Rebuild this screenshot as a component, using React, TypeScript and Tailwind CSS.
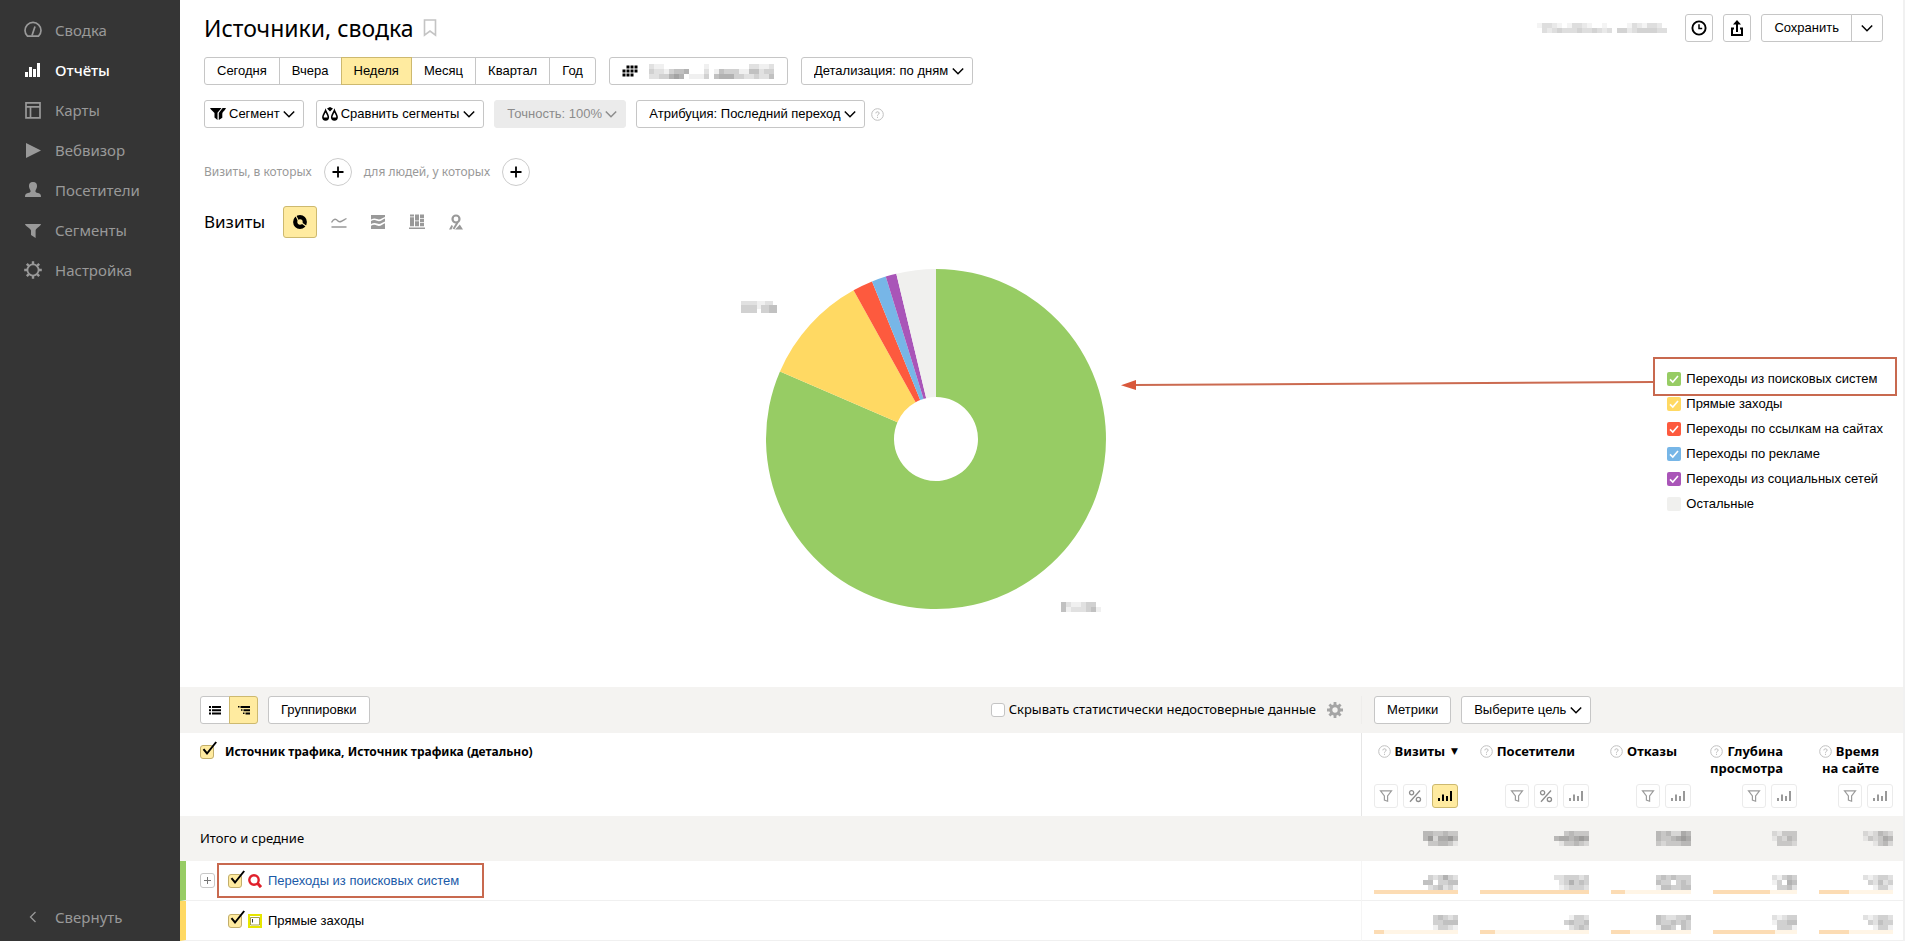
import type { ReactNode } from "react";

const PERIODS = ["Сегодня", "Вчера", "Неделя", "Месяц", "Квартал", "Год"];

const SLICES = [
  { label: "Переходы из поисковых систем", color: "#97cc64", from: 0, to: 293.4, checked: true },
  { label: "Прямые заходы", color: "#ffd963", from: 293.4, to: 331, checked: true },
  { label: "Переходы по ссылкам на сайтах", color: "#fd5a3e", from: 331, to: 337.9, checked: true },
  { label: "Переходы по рекламе", color: "#77b6e7", from: 337.9, to: 342.8, checked: true },
  { label: "Переходы из социальных сетей", color: "#a955b8", from: 342.8, to: 346.5, checked: true },
  { label: "Остальные", color: "#f0f0ee", from: 346.5, to: 360, checked: false },
];

// Hidden values: every digit is the darkness of one square
const MASKS = {
  total: [
    ["4433433", "4625564", "0334431"],
    ["0034333", "4554565", "0133432"],
    ["4342254", "4334565", "3233344"],
    ["21333", "13243", "03332"],
    ["212432", "132354", "001342"],
  ],
  search: [
    ["0323532", "4403344", "0234231"],
    ["2233323", "0235343", "0123332"],
    ["3434333", "4330343", "1443344"],
    ["21343", "13054", "03342"],
    ["212332", "032423", "001331"],
  ],
  direct: [
    ["34323", "33444", "13321"],
    ["01332", "34334", "02343"],
    ["4322334", "4334343", "1443043"],
    ["21233", "13344", "03331"],
    ["212332", "032433", "001331"],
  ],
};

const METRICS = [
  { title: ["Визиты"], percent: true, sorted: true, search: 100, direct: 12 },
  { title: ["Посетители"], percent: true, sorted: false, search: 100, direct: 14 },
  { title: ["Отказы"], percent: false, sorted: false, search: 18, direct: 24 },
  { title: ["Глубина", "просмотра"], percent: false, sorted: false, search: 68, direct: 74 },
  { title: ["Время", "на сайте"], percent: false, sorted: false, search: 40, direct: 40 },
];

const BUTTON = "h-7 rounded-[3px] border border-[#c6c6c6] bg-white text-[13px] text-black";

function Mosaic({ rows, cell = 5, x, y }: { rows: string[]; cell?: number; x?: number; y?: number }) {
  const cols = Math.max(...rows.map((r) => r.length));
  return (
    <svg x={x} y={y} width={cols * cell} height={rows.length * cell} shapeRendering="crispEdges" aria-hidden="true">
      {rows.map((row, j) =>
        row.split("").map((d, i) => (
          <rect key={`${j}-${i}`} x={i * cell} y={j * cell} width={cell} height={cell} fill="#333" opacity={Number(d) * 0.075} />
        ))
      )}
    </svg>
  );
}

function Chevron({ size = 12, className = "" }: { size?: number; className?: string }) {
  return (
    <svg width={size} height={size} viewBox="0 0 12 12" fill="none" stroke="currentColor" strokeWidth="1.5" className={className}>
      <path d="M.8 3.5 6 8.7 11.2 3.5" />
    </svg>
  );
}

function Dropdown({ label, text, disabled = false }: { label: string; text: string; disabled?: boolean }) {
  return (
    <div className={`relative inline-flex ${disabled ? "text-[#8c8c8c]" : "text-black"}`}>
      <select
        aria-label={label}
        disabled={disabled}
        className={`h-7 appearance-none rounded-[3px] border pl-3 pr-[23px] text-[13px] opacity-100 ${
          disabled ? "border-[#ebebeb] bg-[#ebebeb]" : "border-[#c6c6c6] bg-white"
        }`}
      >
        <option>{text}</option>
      </select>
      <Chevron className="pointer-events-none absolute right-[9px] top-2" />
    </div>
  );
}

function Help() {
  return (
    <svg width="13" height="13" viewBox="0 0 13 13" fill="none" className="shrink-0">
      <circle cx="6.5" cy="6.5" r="5.8" stroke="#c0c0c0" />
      <path d="M4.9 5.3c0-2 3.2-2 3.2 0 0 1-1.6 1.1-1.6 2.3M6.5 8.8v1" stroke="#b5b5b5" />
    </svg>
  );
}

function Funnel() {
  return (
    <svg width="14" height="14" viewBox="0 0 14 14" fill="none" stroke="#9b9b9b" strokeWidth="1.2">
      <path d="M1.5 1.8h11L8.6 7v5.2L5.4 11V7Z" />
    </svg>
  );
}

function Percent() {
  return (
    <svg width="14" height="14" viewBox="0 0 14 14" fill="none" stroke="#8c8c8c" strokeWidth="1.3">
      <circle cx="3.6" cy="3.8" r="2.1" />
      <circle cx="10.4" cy="10.4" r="2.1" />
      <path d="M12 1.5 2 12.8" />
    </svg>
  );
}

function MiniBars() {
  return (
    <svg width="16" height="14" viewBox="0 0 16 14" fill="currentColor">
      <path d="M1 9h2v3H1zM5 5.5h2V12H5zM9 7h2v5H9zM13 2h2v10h-2z" />
    </svg>
  );
}

// Box with a tick that sticks out over its corner
function Tick({ label }: { label: string }) {
  return (
    <span className="relative inline-block size-[14px] shrink-0">
      <input
        type="checkbox"
        defaultChecked
        aria-label={label}
        className="block size-[14px] appearance-none rounded-[3px] border border-[#c2ae6b] bg-[#ffeba0]"
      />
      <svg width="18" height="18" viewBox="0 0 18 18" fill="none" className="pointer-events-none absolute bottom-0 left-0">
        <path d="M3.5 8.2 7 12.5 16.2 1" stroke="#000" strokeWidth="2" />
      </svg>
    </span>
  );
}

function polar(r: number, deg: number) {
  const a = (deg * Math.PI) / 180;
  return `${(r * Math.sin(a)).toFixed(2)} ${(-r * Math.cos(a)).toFixed(2)}`;
}

function slicePath(from: number, to: number) {
  const large = to - from > 180 ? 1 : 0;
  return `M${polar(170, from)}A170 170 0 ${large} 1 ${polar(170, to)}L${polar(42, to)}A42 42 0 ${large} 0 ${polar(42, from)}Z`;
}

const NAV: { label: string; active?: boolean; icon: ReactNode }[] = [
  {
    label: "Сводка",
    icon: (
      <g fill="none" stroke="currentColor" strokeWidth="1.7">
        <path d="M3.5 15.2A8 8 0 1 1 14.5 15.2Z" />
        <path d="M8 14.5 11 5.5" />
      </g>
    ),
  },
  { label: "Отчёты", active: true, icon: <path d="M1 11h3v5H1zM5 6h3v10H5zM9 8h3v8H9zM13 2h3v14h-3z" fill="currentColor" /> },
  {
    label: "Карты",
    icon: <path d="M2 1.9h14v15H2ZM2 5.8h14M6.5 5.8v11" fill="none" stroke="currentColor" strokeWidth="1.7" />,
  },
  { label: "Вебвизор", icon: <path d="M2 2 17 9.5 2 17Z" fill="currentColor" /> },
  {
    label: "Посетители",
    icon: <path d="M9 1c3 0 4.3 2 4 4.6-.3 2.2-1.2 3-1.6 4.5 0 1.2.6 1.5 2.6 2 2.2.6 3 1.2 3 3.9H1c0-2.7.8-3.3 3-3.9 2-.5 2.6-.8 2.6-2C6.2 8.6 5.3 7.8 5 5.6 4.7 3 6 1 9 1Z" fill="currentColor" />,
  },
  { label: "Сегменты", icon: <path d="M1 3h16c-.6 2.6-5 4-5.4 6.5V17L7 14V9.5C6.2 7 1.6 5.6 1 3Z" fill="currentColor" /> },
  {
    label: "Настройка",
    icon: (
      <g fill="none" stroke="currentColor">
        <circle cx="9" cy="9" r="5.6" strokeWidth="1.8" />
        <path
          d="M9 .2v3M9 14.8v3M.2 9h3M14.8 9h3M2.8 2.8 4.9 4.9M13.1 13.1l2.1 2.1M2.8 15.2l2.1-2.1M13.1 4.9l2.1-2.1"
          strokeWidth="2.4"
        />
      </g>
    ),
  },
];

function Sidebar() {
  return (
    <aside className="flex w-[180px] shrink-0 flex-col justify-between bg-[#353535] pb-1 pt-[10px] font-['Noto_Sans',sans-serif] text-[15px]">
      <nav>
        {NAV.map((item) => (
          <a
            key={item.label}
            href="#"
            className={`flex h-10 items-center gap-[13px] pl-6 ${item.active ? "font-medium text-white" : "text-[#999]"}`}
          >
            <svg width="18" height="18" viewBox="0 0 18 18">
              {item.icon}
            </svg>
            {item.label}
          </a>
        ))}
      </nav>
      <button className="flex h-10 items-center gap-[13px] pl-6 text-[#999]">
        <svg width="18" height="18" viewBox="0 0 18 18" fill="none" stroke="currentColor" strokeWidth="1.3">
          <path d="M11.5 4 6.5 9l5 5" />
        </svg>
        Свернуть
      </button>
    </aside>
  );
}

function Toolbar() {
  return (
    <>
      <header className="flex h-7 items-center justify-between">
        <div className="flex items-center gap-[10px]">
          <h1 className="font-['Noto_Sans',sans-serif] text-[23px] leading-7">Источники, сводка</h1>
          <button aria-label="В закладки">
            <svg width="14" height="18" viewBox="0 0 14 18" fill="none" stroke="#c4c4c4" strokeWidth="1.6">
              <path d="M1.5 1h11v15.2L7 12l-5.5 4.2Z" />
            </svg>
          </button>
        </div>
        <div className="flex items-center">
          <div className="mr-[18px] opacity-70">
            <Mosaic rows={["13321013321001000013213320", "03234333433432304423444433"]} />
          </div>
          <button aria-label="История" className={`${BUTTON} mr-[10px] flex w-7 items-center justify-center`}>
            <svg width="16" height="16" viewBox="0 0 16 16" fill="none" stroke="#000" strokeWidth="1.9">
              <circle cx="8" cy="8" r="6.6" />
              <path d="M8 4.2V8.5h3.2" strokeWidth="1.5" />
            </svg>
          </button>
          <button aria-label="Поделиться" className={`${BUTTON} mr-[10px] flex w-7 items-center justify-center`}>
            <svg width="14" height="16" viewBox="0 0 14 16" fill="none" stroke="#000" strokeWidth="2">
              <path d="M4 8.5H2V15h10V8.5h-2M7 12V3" />
              <path d="M7 0 11 4.6H3Z" fill="#000" stroke="none" />
            </svg>
          </button>
          <button className={`${BUTTON} rounded-r-none px-3`}>Сохранить</button>
          <button aria-label="Ещё" className={`${BUTTON} -ml-px flex w-8 items-center justify-center rounded-l-none`}>
            <Chevron />
          </button>
        </div>
      </header>

      <div className="mt-[15px] flex">
        <div className="mr-[13px] flex">
          {PERIODS.map((p) => (
            <button
              key={p}
              className={`h-7 border px-3 text-[13px] not-first:-ml-px first:rounded-l-[3px] last:rounded-r-[3px] ${
                p === "Неделя" ? "z-10 border-[#cdb96f] bg-[#ffeba0]" : "border-[#c6c6c6] bg-white"
              }`}
            >
              {p}
            </button>
          ))}
        </div>
        <button aria-label="Выбрать даты" className={`${BUTTON} mr-[13px] flex w-[179px] items-center gap-[6px] pl-3`}>
          <svg width="16" height="12" viewBox="0 0 16 12">
            <path d="M4.5.5h3v3h-3zM8.5.5h3v3h-3zM12.5.5h3v3h-3zM.5 4.5h3v3h-3zM4.5 4.5h3v3h-3zM8.5 4.5h3v3h-3zM12.5 4.5h3v3h-3zM.5 8.5h3v3h-3zM4.5 8.5h3v3h-3zM8.5 8.5h3v3h-3z" />
          </svg>
          <Mosaic rows={["02110000000010000000022112", "03221344500020143331144233", "02233565011130455533223224"]} />
        </button>
        <Dropdown label="Детализация" text="Детализация: по дням" />
      </div>

      <div className="mt-[15px] flex items-center">
        <button className={`${BUTTON} mr-3 flex items-center gap-[3px] px-[5px] pr-2`}>
          <svg width="16" height="14" viewBox="0 0 16 14">
            <path d="M0 1h11.5L7.5 5.8V13L4.5 10.5V6C3.5 4.8 1 3 0 1ZM12.6 1H16c-.6 2.5-3.4 3.4-3.7 5.5v4.2L8.8 13V6Z" />
          </svg>
          Сегмент
          <Chevron />
        </button>
        <button className={`${BUTTON} mr-[10px] flex items-center gap-[3px] px-[5px] pr-2`}>
          <svg width="16" height="14" viewBox="0 0 16 14" fill="none" stroke="#000" strokeWidth="1.6">
            <path d="M3.6 3.5C2.6 6 .9 8 .9 10c0 1.6 1.2 2.9 2.7 2.9S6.3 11.6 6.3 10c0-2-1.7-4-2.7-6.5Z" />
            <path d="M12.4 3.5c-1 2.5-2.7 4.5-2.7 6.5 0 1.6 1.2 2.9 2.7 2.9s2.7-1.3 2.7-2.9c0-2-1.7-4-2.7-6.5Z" />
            <path d="M1.5 10.5h4.2v2H1.5zM10.3 10.5h4.2v2h-4.2zM5 1.5 8 4.5l3-3L8 0Z" fill="#000" stroke="none" />
          </svg>
          Сравнить сегменты
          <Chevron className="ml-px" />
        </button>
        <div className="mr-[10px] flex">
          <Dropdown label="Точность" text="Точность: 100%" disabled />
        </div>
        <div className="mr-[6px] flex">
          <Dropdown label="Атрибуция" text="Атрибуция: Последний переход" />
        </div>
        <Help />
      </div>

      <div className="mt-[30px] flex items-center gap-3 font-['Noto_Sans',sans-serif] text-[12px] text-[#999]">
        Визиты, в которых
        <AddButton label="Добавить условие на визиты" />
        <span>для людей, у которых</span>
        <AddButton label="Добавить условие на людей" />
      </div>
    </>
  );
}

function AddButton({ label }: { label: string }) {
  return (
    <button aria-label={label} className="flex size-7 items-center justify-center rounded-full border border-[#ccc]">
      <svg width="12" height="12" viewBox="0 0 12 12" stroke="#000" strokeWidth="1.8">
        <path d="M6 .5v11M.5 6h11" />
      </svg>
    </button>
  );
}

function ChartTypes() {
  return (
    <div className="mt-5 flex h-8 items-center">
      <h2 className="mr-[18px] font-['Noto_Sans',sans-serif] text-[17px]">Визиты</h2>
      <button aria-label="Круговая" className="mr-[14px] flex h-8 w-[34px] items-center justify-center rounded-[3px] border border-[#cdb96f] bg-[#ffeba0]">
        <svg width="16" height="16" viewBox="0 0 16 16" fill="none">
          <circle cx="8" cy="8" r="4.8" stroke="#000" strokeWidth="4.2" />
          <path d="M6.5 7 3.5 1M9 8.5l5.5 4" stroke="#ffeba0" strokeWidth="1.1" />
        </svg>
      </button>
      <div className="flex gap-[23px] text-[#999]">
        <button aria-label="Линии">
          <svg width="16" height="16" viewBox="0 0 16 16" fill="none" stroke="currentColor" strokeWidth="1.4">
            <path d="M.5 8.5C3 4 5 5 7 7s4 0 8.500-2.500M.5 13h15" />
          </svg>
        </button>
        <button aria-label="Области">
          <svg width="16" height="16" viewBox="0 0 16 16" fill="currentColor">
            <path d="M1 1h14v2c-3 1-5 3.500-8 2-2-1-4-.6-6 .5ZM1 7c2-1.200 4-1.300 6-.3 3 1.500 5-1 8-2.200v3c-3 1.200-5 3.500-8 2-2-1-4-.6-6 .6ZM1 11.800c2-1.200 4-1.300 6-.3 3 1.500 5-1 8-2.200V15H1Z" />
          </svg>
        </button>
        <button aria-label="Колонки">
          <svg width="16" height="16" viewBox="0 0 16 16" fill="currentColor">
            <path d="M1 .5h4v2H1zM1 3.200h4v9H1zM6 .5h4v6H6zM6 7.200h4v5H6zM11 .5h4V4h-4zM11 4.700h4V8h-4zM11 8.700h4v3.500h-4zM0 13.500h16V15H0z" />
          </svg>
        </button>
        <button aria-label="Карта">
          <svg width="16" height="16" viewBox="0 0 16 16" fill="none" stroke="currentColor">
            <circle cx="8" cy="5" r="3.500" strokeWidth="2.200" />
            <path d="M9.500 8.500 5.500 15" strokeWidth="2" />
            <path d="M1 15.500 3.500 11l1.500 1-1.500 3.500ZM7 15.500l3-3 1.800-2L15 15.500Z" fill="currentColor" stroke="none" />
          </svg>
        </button>
      </div>
    </div>
  );
}

function Chart() {
  return (
    <section className="relative flex items-center pb-12 pt-px">
      <div className="flex flex-1 justify-center">
        <svg width="400" height="400" viewBox="-200 -200 400 400" role="img" aria-label="Визиты по источникам">
          {SLICES.map((s) => (
            <path key={s.label} d={slicePath(s.from, s.to)} fill={s.color} />
          ))}
          <Mosaic x={-195} y={-138} cell={4} rows={["222211220", "333313344", "333303344"]} />
          <Mosaic x={125} y={163} rows={["42112330", "41222341"]} />
        </svg>
      </div>
      <ul className="shrink-0 pt-1">
        {SLICES.map((s, i) => (
          <li key={s.label} className="relative">
            <label className="flex h-[25px] items-center gap-[5px] text-[13px]">
              <span className="relative size-[14px]">
                <input
                  type="checkbox"
                  defaultChecked={s.checked}
                  className="block size-[14px] appearance-none rounded-[2px]"
                  style={{ backgroundColor: s.color }}
                />
                {s.checked && (
                  <svg width="14" height="14" viewBox="0 0 14 14" fill="none" stroke="#fff" strokeWidth="1.6" className="pointer-events-none absolute left-0 top-0">
                    <path d="M3 7.3 5.8 10 11 4" />
                  </svg>
                )}
              </span>
              {s.label}
            </label>
            {i === 0 && (
              <div className="pointer-events-none absolute -bottom-[5px] -left-[14px] -right-[14px] -top-[9px] z-10 border-2 border-[#c8694f]" />
            )}
          </li>
        ))}
      </ul>
      <svg width="532" height="14" viewBox="0 0 532 14" className="pointer-events-none absolute right-[230px] top-[140px]">
        <path d="M532 4 12 7" stroke="#cb6a50" strokeWidth="2" />
        <path d="M0 7.2 15 2v10Z" fill="#d9583b" />
      </svg>
    </section>
  );
}

function MetricHeader({ metric }: { metric: (typeof METRICS)[number] }) {
  const btn = "flex h-6 items-center justify-center rounded-[3px] border";
  return (
    <th className="pb-2 pl-3 pr-[10px] pt-[10px] align-top font-bold">
      <div className="flex h-[34px] justify-end gap-[6px] text-right font-['Noto_Sans',sans-serif] text-[13px] leading-[17px]">
        <div className={metric.sorted ? "" : "pr-[14px]"}>
          {metric.title.map((line, i) => (
            <div key={line} className="flex items-center justify-end gap-1 whitespace-nowrap">
              {i === 0 && <Help />}
              {line}
            </div>
          ))}
        </div>
        {metric.sorted && <span className="font-['DejaVu_Sans',sans-serif] text-[9px]">▼</span>}
      </div>
      <div className="mt-[7px] flex justify-end gap-[5px]">
        <button aria-label="Фильтр" className={`${btn} w-6 border-[#ebebeb]`}>
          <Funnel />
        </button>
        {metric.percent && (
          <button aria-label="Проценты" className={`${btn} w-6 border-[#ebebeb]`}>
            <Percent />
          </button>
        )}
        <button
          aria-label="График"
          className={`${btn} w-[26px] ${metric.sorted ? "border-[#cdb96f] bg-[#ffeba0] text-black" : "border-[#ebebeb] text-[#999]"}`}
        >
          <MiniBars />
        </button>
      </div>
    </th>
  );
}

function MetricCell({ mask, value }: { mask: string[]; value: number }) {
  return (
    <td className="border-b border-[#f0f0f0] pl-3 pr-[10px] pt-[7px] align-middle">
      <div className="flex justify-end">
        <Mosaic rows={mask} />
      </div>
      <div className="h-1 bg-[#fff5e6]">
        <div className="h-full bg-[#fcdcb4]" style={{ width: `${value}%` }} />
      </div>
    </td>
  );
}

function DataTable() {
  return (
    <section>
      <div className="flex h-[46px] items-center bg-[#f4f3f1]">
        <div className="flex flex-1 items-center pl-5 pr-[18px]">
          <button aria-label="Список" className={`${BUTTON} flex w-[30px] items-center justify-center rounded-r-none`}>
            <svg width="12" height="10" viewBox="0 0 12 10">
              <path d="M0 1h2v2H0zM3 1h9v2H3zM0 4.2h2v2H0zM3 4.2h9v2H3zM0 7.4h2v2H0zM3 7.4h9v2H3z" />
            </svg>
          </button>
          <button
            aria-label="Дерево"
            className="-ml-px mr-[10px] flex h-7 w-[29px] items-center justify-center rounded-r-[3px] border border-[#cdb96f] bg-[#ffeba0]"
          >
            <svg width="12" height="10" viewBox="0 0 12 10">
              <path d="M0 1h1.500v1.500H0zM2.500 1H12v2H2.500zM3 4.200h1.500v1.500H3zM5.500 4.200H12v2H5.500zM5 7.400h1.500v1.500H5zM7.500 7.400H12v2H7.500z" />
            </svg>
          </button>
          <button className={`${BUTTON} px-3`}>Группировки</button>
          <label className="ml-auto mr-[11px] flex items-center gap-1 font-['Noto_Sans',sans-serif] text-[13px]">
            <input type="checkbox" className="size-[14px] appearance-none rounded-[3px] border border-[#c4c4c4] bg-white" />
            Скрывать статистически недостоверные данные
          </label>
          <button aria-label="Настройки точности">
            <svg width="16" height="16" viewBox="0 0 16 16" fill="none" stroke="#a5a5a5">
              <circle cx="8" cy="8" r="4.2" strokeWidth="3" />
              <path d="M8 0v3M8 13v3M0 8h3M13 8h3M2.4 2.4 4.5 4.5M11.5 11.5l2.1 2.1M2.4 13.6l2.1-2.1M11.5 4.5l2.1-2.1" strokeWidth="2.8" />
            </svg>
          </button>
        </div>
        <div className="flex w-[542px] shrink-0 items-center gap-[10px] border-l border-[#eeedeb] pl-3">
          <button className={`${BUTTON} px-3`}>Метрики</button>
          <Dropdown label="Цель" text="Выберите цель" />
        </div>
      </div>

      <table className="w-full table-fixed border-separate border-spacing-0 text-[13px]">
        <colgroup>
          <col />
          <col className="w-[106px]" />
          <col className="w-[131px]" />
          <col className="w-[102px]" />
          <col className="w-[106px]" />
          <col className="w-[96px]" />
        </colgroup>
        <thead>
          <tr>
            <th className="border-r border-[#e6e6e6] pl-5 pt-[10px] text-left align-top font-['Noto_Sans',sans-serif] text-[12px] font-bold leading-[17px]">
              <div className="flex items-center gap-[11px]">
                <Tick label="Выбрать все источники" />
                Источник трафика, Источник трафика (детально)
              </div>
            </th>
            {METRICS.map((m) => (
              <MetricHeader key={m.title[0]} metric={m} />
            ))}
          </tr>
        </thead>
        <tbody>
          <tr className="h-[45px] bg-[#f4f3f1]">
            <td className="pl-5 font-['Noto_Sans',sans-serif]">Итого и средние</td>
            {MASKS.total.map((mask, i) => (
              <td key={i} className="pl-3 pr-[10px]">
                <div className="flex justify-end">
                  <Mosaic rows={mask} />
                </div>
              </td>
            ))}
          </tr>
          <tr className="h-10">
            <td className="border-b border-l-[6px] border-r border-b-[#f0f0f0] border-l-[#97cc64] border-r-[#f5f5f5] pl-[14px]">
              <div className="flex items-center gap-[13px]">
                <button aria-label="Развернуть" className="flex size-[15px] items-center justify-center rounded-[3px] border border-[#c9c9c9]">
                  <svg width="7" height="7" viewBox="0 0 7 7" stroke="#777">
                    <path d="M3.5 0v7M0 3.5h7" />
                  </svg>
                </button>
                <div className="relative flex items-center gap-[6px]">
                  <Tick label="Переходы из поисковых систем" />
                  <svg width="14" height="14" viewBox="0 0 14 14" fill="none" stroke="#e0202b">
                    <circle cx="6" cy="6" r="4.7" strokeWidth="2.4" />
                    <path d="m9.3 9 3.7 4.2" strokeWidth="3" />
                  </svg>
                  <a href="#" className="text-[#1a5aa8]">
                    Переходы из поисковых систем
                  </a>
                  <div className="pointer-events-none absolute -bottom-2 -left-[11px] -right-[25px] -top-2 border-2 border-[#c8694f]" />
                </div>
              </div>
            </td>
            {METRICS.map((m, i) => (
              <MetricCell key={i} mask={MASKS.search[i]} value={m.search} />
            ))}
          </tr>
          <tr className="h-10">
            <td className="border-b border-l-[6px] border-r border-b-[#f0f0f0] border-l-[#ffd963] border-r-[#f5f5f5] pl-[42px]">
              <div className="flex items-center gap-[6px]">
                <Tick label="Прямые заходы" />
                <svg width="14" height="14" viewBox="0 0 14 14" fill="#fff">
                  <path d="M1 1h12v12H1z" stroke="#e6e600" strokeWidth="2" />
                  <path d="M2.5 3.5h9v7.500h-9z" stroke="#8f8a20" strokeWidth=".8" />
                  <path d="M4.5 5v3.5" stroke="#333" />
                </svg>
                Прямые заходы
              </div>
            </td>
            {METRICS.map((m, i) => (
              <MetricCell key={i} mask={MASKS.direct[i]} value={m.direct} />
            ))}
          </tr>
        </tbody>
      </table>
    </section>
  );
}

export default function App() {
  return (
    <div className="flex min-h-screen bg-white font-['Liberation_Sans',Arial,sans-serif] text-black">
      <Sidebar />
      <main className="min-w-0 flex-1 border-r-2 border-[#f1f1f1]">
        <div className="pl-6 pr-5 pt-[14px]">
          <Toolbar />
          <ChartTypes />
          <Chart />
        </div>
        <DataTable />
      </main>
    </div>
  );
}
